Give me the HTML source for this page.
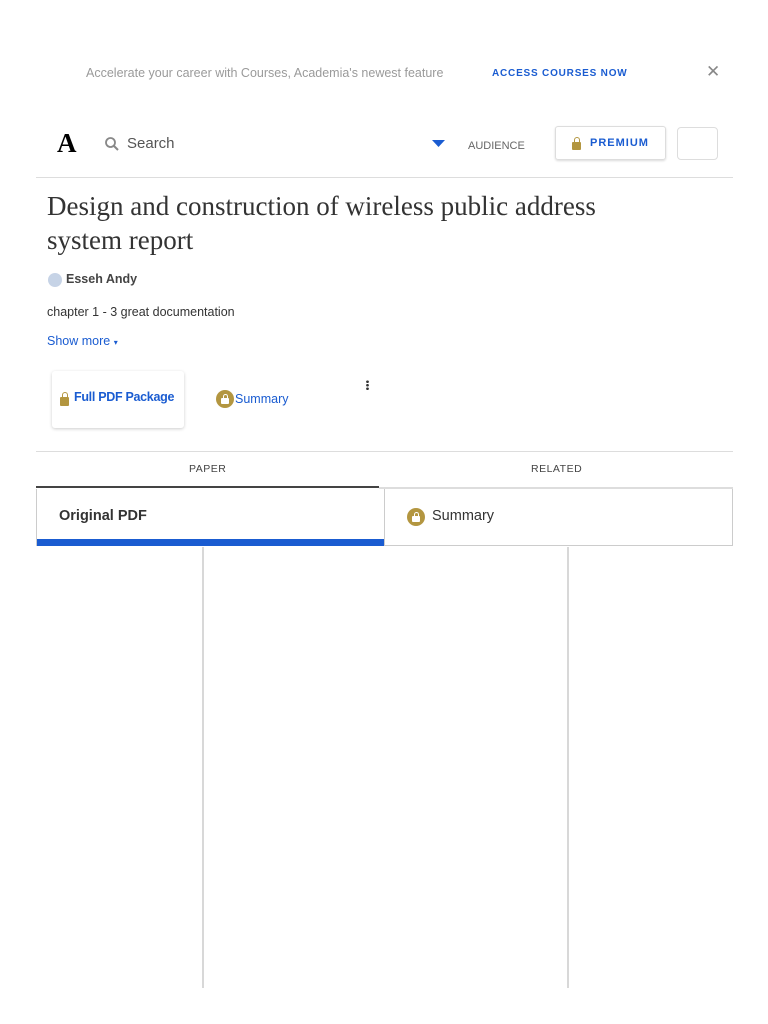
<!DOCTYPE html>
<html><head><meta charset="utf-8"><style>
*{box-sizing:border-box;margin:0;padding:0}
body{width:768px;height:1024px;background:#fff;font-family:"Liberation Sans",sans-serif;position:relative;overflow:hidden;color:#333}
.a{position:absolute}
.lock{display:block;position:absolute;width:9px;height:8px;background:#b39640;border-radius:1px}
.lock:before{content:"";position:absolute;left:1.5px;top:-5px;width:6px;height:6px;border:1.5px solid #b39640;border-bottom:none;border-radius:3px 3px 0 0;box-sizing:border-box}
.clock{display:block;width:18px;height:18px;border-radius:50%;background:#b39640;position:absolute}
.clock i{position:absolute;left:5px;top:8px;width:8px;height:6px;background:#fff;border-radius:1px}
.clock i:before{content:"";position:absolute;left:1.5px;top:-4px;width:5px;height:5px;border:1.3px solid #fff;border-bottom:none;border-radius:3px 3px 0 0;box-sizing:border-box}
</style></head><body>
<div class="a" style="left:86px;top:66px;font-size:12.5px;color:#9a9a9a">Accelerate your career with Courses, Academia's newest feature</div>
<div class="a" style="left:492px;top:68px;font-size:10px;font-weight:bold;color:#1a5cd1;letter-spacing:.8px">ACCESS COURSES NOW</div>
<div class="a" style="left:706px;top:62px;font-size:17px;color:#888">✕</div>
<div class="a" style="left:57px;top:128px;font-family:'Liberation Serif',serif;font-weight:bold;font-size:27px;color:#000">A</div>
<svg class="a" style="left:104px;top:136px" width="16" height="16" viewBox="0 0 16 16"><circle cx="6.5" cy="6.5" r="4.5" fill="none" stroke="#888" stroke-width="1.8"/><path d="M10 10l4 4" stroke="#888" stroke-width="2"/></svg>
<div class="a" style="left:127px;top:135px;font-size:15px;color:#555">Search</div>
<svg class="a" style="left:432px;top:140px" width="13" height="8"><path d="M0 0h13L6.5 7z" fill="#1a5cd1"/></svg>
<div class="a" style="left:468px;top:140px;font-size:11px;color:#666">AUDIENCE</div>
<div class="a" style="left:555px;top:126px;width:111px;height:34px;border:1px solid #ddd;border-radius:3px;box-shadow:0 1px 2px rgba(0,0,0,.15)"></div>
<span class="lock" style="left:572px;top:142px"></span>
<div class="a" style="left:590px;top:137px;font-size:11px;font-weight:bold;color:#1a5cd1;letter-spacing:1px">PREMIUM</div>
<div class="a" style="left:677px;top:127px;width:41px;height:33px;border:1px solid #ddd;border-radius:4px"></div>
<div class="a" style="left:36px;top:177px;width:697px;height:1px;background:#ddd"></div>
<div class="a" style="left:47px;top:189px;font-family:'Liberation Serif',serif;font-size:27px;line-height:34px;color:#333;width:610px">Design and construction of wireless public address system report</div>
<div class="a" style="left:48px;top:273px;width:14px;height:14px;border-radius:50%;background:#c6d3e6"></div>
<div class="a" style="left:66px;top:272px;font-size:12.5px;font-weight:bold;color:#444">Esseh Andy</div>
<div class="a" style="left:47px;top:305px;font-size:12.5px;color:#333">chapter 1 - 3 great documentation</div>
<div class="a" style="left:47px;top:334px;font-size:12.5px;color:#1a5cd1">Show more <span style="font-size:8px">▾</span></div>
<div class="a" style="left:52px;top:371px;width:132px;height:57px;border-radius:3px;box-shadow:0 1px 3px rgba(0,0,0,.2)"></div>
<span class="lock" style="left:60px;top:397px;height:9px"></span>
<div class="a" style="left:74px;top:390px;font-size:12.5px;font-weight:bold;color:#1a5cd1;letter-spacing:-.3px">Full PDF Package</div>
<span class="clock" style="left:216px;top:390px"><i></i></span>
<div class="a" style="left:235px;top:392px;font-size:12.5px;color:#1a5cd1">Summary</div>
<div class="a" style="left:366px;top:380px;width:3px;height:10px;background:radial-gradient(circle,#333 1.2px,transparent 1.5px) 0 0/3px 3.5px"></div>
<div class="a" style="left:36px;top:451px;width:697px;height:1px;background:#ddd"></div>
<div class="a" style="left:189px;top:463px;font-size:10.5px;color:#444;letter-spacing:.5px">PAPER</div>
<div class="a" style="left:531px;top:463px;font-size:10.5px;color:#444;letter-spacing:.5px">RELATED</div>
<div class="a" style="left:36px;top:486px;width:343px;height:2px;background:#444"></div>
<div class="a" style="left:379px;top:487px;width:354px;height:2px;background:#ddd"></div>
<div class="a" style="left:36px;top:489px;width:349px;height:57px;border:1px solid #ccc;border-top:none"></div>
<div class="a" style="left:37px;top:539px;width:347px;height:7px;background:#1a5cd1"></div>
<div class="a" style="left:59px;top:508px;font-size:14.5px;font-weight:bold;color:#333">Original PDF</div>
<div class="a" style="left:385px;top:489px;width:348px;height:57px;border:1px solid #ccc;border-left:none;border-top:none"></div>
<span class="clock" style="left:407px;top:508px"><i></i></span>
<div class="a" style="left:432px;top:508px;font-size:14.5px;color:#333">Summary</div>
<div class="a" style="left:202px;top:547px;width:2px;height:441px;background:#d8d8d8"></div>
<div class="a" style="left:567px;top:547px;width:2px;height:441px;background:#d8d8d8"></div>
</body></html>
